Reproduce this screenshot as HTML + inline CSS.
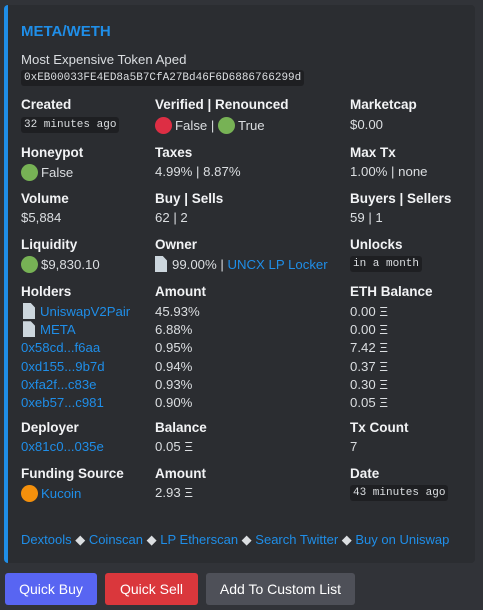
<!DOCTYPE html><html><head><style>
body{margin:0;background:#313338;width:483px;height:610px;overflow:hidden;font-family:"Liberation Sans",sans-serif;color:#dbdee1;font-size:13.2px;position:relative}
.embed{position:absolute;left:4px;top:5px;width:471px;height:558px;background:#2b2d31;border-left:4px solid #1f8ee8;border-radius:4px;box-sizing:border-box}
.a{position:absolute;white-space:nowrap}
.t{color:#1f8ee8;font-weight:bold;font-size:15px}
.l{font-weight:bold;color:#f2f3f5;font-size:13.5px}
.c{font-family:"Liberation Mono",monospace;font-size:11px;background:#1e1f22;padding:2px 3px;border-radius:3px;color:#dbdee1}
.lk{color:#1f8ee8}
.dot{display:inline-block;width:17px;height:17px;border-radius:50%;vertical-align:-4px;margin-right:3px}
.g{background:#77b255}.r{background:#dd2e44}.o{background:#f4900c}
.doc{display:inline-block;width:12px;height:16px;background:#ccd6dd;vertical-align:-3px;margin-right:5px;clip-path:polygon(0 0,65% 0,100% 28%,100% 100%,0 100%)}
.btn{position:absolute;top:573px;height:32px;border-radius:3px;color:#fff;font-size:14px;line-height:32px;text-align:center}
</style></head><body>
<div class="embed"></div>
<div class="a t" style="left:21px;top:23px">META/WETH</div>
<div class="a" style="left:21px;top:52px">Most Expensive Token Aped</div>
<div class="a c" style="left:21px;top:70px">0xEB00033FE4ED8a5B7CfA27Bd46F6D6886766299d</div>

<div class="a l" style="left:21px;top:97px">Created</div>
<div class="a c" style="left:21px;top:117px">32 minutes ago</div>
<div class="a l" style="left:155px;top:97px">Verified | Renounced</div>
<div class="a" style="left:155px;top:117px"><span class="dot r"></span>False | <span class="dot g"></span>True</div>
<div class="a l" style="left:350px;top:97px">Marketcap</div>
<div class="a" style="left:350px;top:117px">$0.00</div>

<div class="a l" style="left:21px;top:145px">Honeypot</div>
<div class="a" style="left:21px;top:164px"><span class="dot g"></span>False</div>
<div class="a l" style="left:155px;top:145px">Taxes</div>
<div class="a" style="left:155px;top:164px">4.99% | 8.87%</div>
<div class="a l" style="left:350px;top:145px">Max Tx</div>
<div class="a" style="left:350px;top:164px">1.00% | none</div>

<div class="a l" style="left:21px;top:191px">Volume</div>
<div class="a" style="left:21px;top:210px">$5,884</div>
<div class="a l" style="left:155px;top:191px">Buy | Sells</div>
<div class="a" style="left:155px;top:210px">62 | 2</div>
<div class="a l" style="left:350px;top:191px">Buyers | Sellers</div>
<div class="a" style="left:350px;top:210px">59 | 1</div>

<div class="a l" style="left:21px;top:237px">Liquidity</div>
<div class="a" style="left:21px;top:256px"><span class="dot g"></span>$9,830.10</div>
<div class="a l" style="left:155px;top:237px">Owner</div>
<div class="a" style="left:155px;top:256px"><span class="doc"></span>99.00% | <span class="lk">UNCX LP Locker</span></div>
<div class="a l" style="left:350px;top:237px">Unlocks</div>
<div class="a c" style="left:350px;top:256px">in a month</div>

<div class="a l" style="left:21px;top:284px">Holders</div>
<div class="a l" style="left:155px;top:284px">Amount</div>
<div class="a l" style="left:350px;top:284px">ETH Balance</div>
<div class="a" style="left:21px;top:303px;line-height:18.2px">
<div><span class="doc" style="margin-left:2px"></span><span class="lk">UniswapV2Pair</span></div>
<div><span class="doc" style="margin-left:2px"></span><span class="lk">META</span></div>
<div class="lk">0x58cd...f6aa</div><div class="lk">0xd155...9b7d</div><div class="lk">0xfa2f...c83e</div><div class="lk">0xeb57...c981</div></div>
<div class="a" style="left:155px;top:303px;line-height:18.2px"><div>45.93%</div><div>6.88%</div><div>0.95%</div><div>0.94%</div><div>0.93%</div><div>0.90%</div></div>
<div class="a" style="left:350px;top:303px;line-height:18.2px"><div>0.00 Ξ</div><div>0.00 Ξ</div><div>7.42 Ξ</div><div>0.37 Ξ</div><div>0.30 Ξ</div><div>0.05 Ξ</div></div>

<div class="a l" style="left:21px;top:420px">Deployer</div>
<div class="a lk" style="left:21px;top:439px">0x81c0...035e</div>
<div class="a l" style="left:155px;top:420px">Balance</div>
<div class="a" style="left:155px;top:439px">0.05 Ξ</div>
<div class="a l" style="left:350px;top:420px">Tx Count</div>
<div class="a" style="left:350px;top:439px">7</div>

<div class="a l" style="left:21px;top:466px">Funding Source</div>
<div class="a" style="left:21px;top:485px"><span class="dot o"></span><span class="lk">Kucoin</span></div>
<div class="a l" style="left:155px;top:466px">Amount</div>
<div class="a" style="left:155px;top:485px">2.93 Ξ</div>
<div class="a l" style="left:350px;top:466px">Date</div>
<div class="a c" style="left:350px;top:485px">43 minutes ago</div>

<div class="a" style="left:21px;top:532px;font-size:13px"><span class="lk">Dextools</span> ◆ <span class="lk">Coinscan</span> ◆ <span class="lk">LP Etherscan</span> ◆ <span class="lk">Search Twitter</span> ◆ <span class="lk">Buy on Uniswap</span></div>

<div class="btn" style="left:5px;width:92px;background:#5865f2">Quick Buy</div>
<div class="btn" style="left:105px;width:93px;background:#da373c">Quick Sell</div>
<div class="btn" style="left:206px;width:149px;background:#4e5058">Add To Custom List</div>
</body></html>
